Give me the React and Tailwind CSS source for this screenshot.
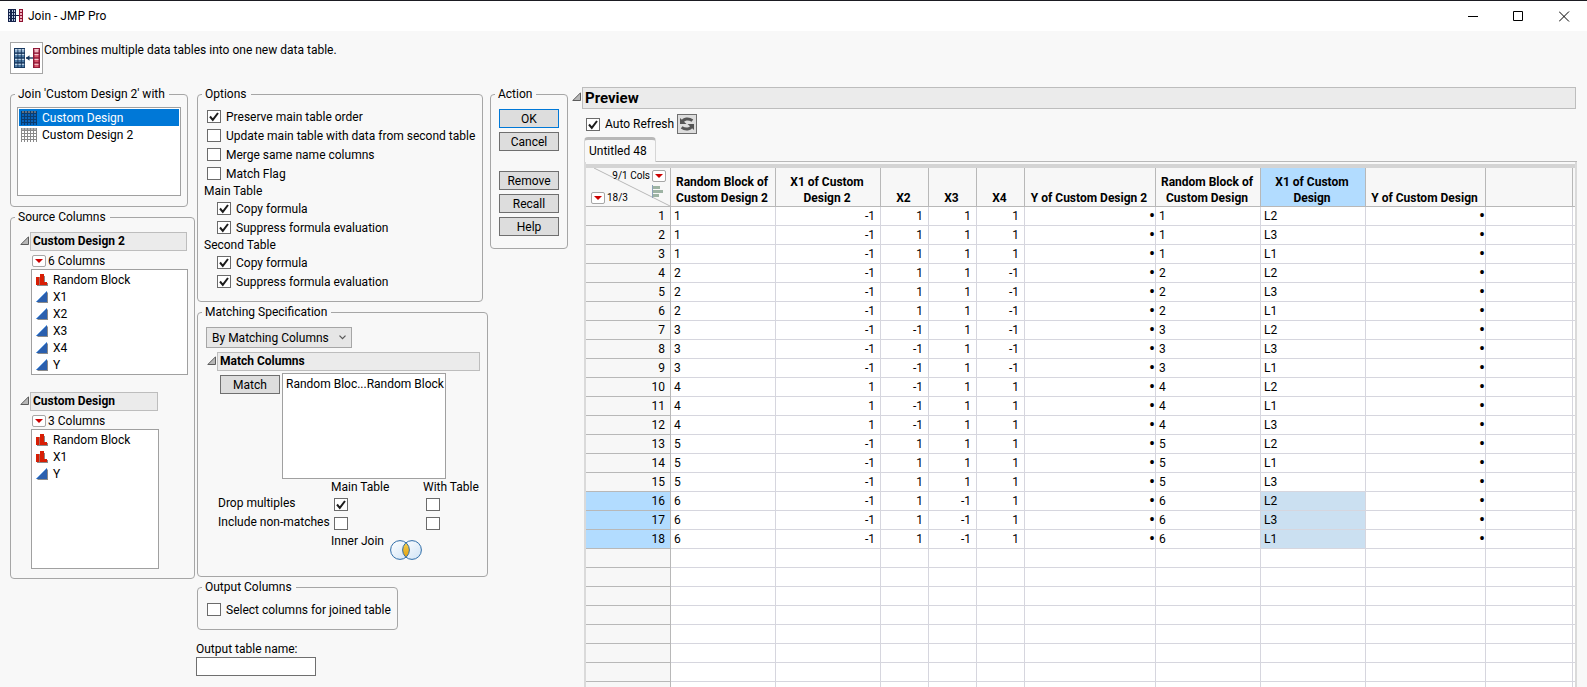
import React from 'react';

const cx = (...parts) => parts.filter(Boolean).join(' ');

/* ---------- icons ---------- */

function JoinIcon({ className }) {
  const rows = [0, 1, 2, 3];
  return (
    <svg viewBox="0 0 26 22" className={className} aria-hidden="true">
      <rect x="0" y="1" width="11" height="20" fill="#17375e" />
      {rows.map((r) =>
        [0, 1, 2].map((c) => (
          <g key={`${r}-${c}`}>
            <rect x={1 + c * 3.4} y={2 + r * 4.9} width="2.4" height="3.4" fill={r === 0 ? '#8fb0cf' : '#4f7ca6'} />
            <rect x={1 + c * 3.4} y={2 + r * 4.9} width="2.4" height="1.2" fill="#c3d5e6" />
          </g>
        ))
      )}
      <path d="M12 11h7" stroke="#17375e" strokeWidth="1.4" />
      <path d="M15.5 8.2v5.6L12 11z" fill="#17375e" />
      <rect x="19" y="1" width="7" height="20" fill="#8e1836" />
      {rows.map((r) => (
        <g key={r}>
          <rect x="20.5" y={2 + r * 4.9} width="4" height="3.4" fill={r === 0 ? '#f0b7c2' : '#d8566b'} />
          <rect x="20.5" y={2 + r * 4.9} width="4" height="1.2" fill="#f3c6ce" />
        </g>
      ))}
    </svg>
  );
}

function SmallJoinIcon() {
  return (
    <svg viewBox="0 0 16 14" className="h-3.5 w-4 shrink-0" shapeRendering="crispEdges" aria-hidden="true">
      <path d="M0 0h8v13H0z" fill="#14224a" />
      <path d="M1 1h1v2H1zM4 1h1v2H4zM6 1h1v2H6zM1 4h1v2H1zM4 4h1v2H4zM6 4h1v2H6zM1 7h1v2H1zM4 7h1v2H4zM6 7h1v2H6zM1 10h1v2H1zM4 10h1v2H4zM6 10h1v2H6z" fill="#b9c6dd" />
      <path d="M8 6h3v1H8z" fill="#14224a" />
      <path d="M11 0h4v13h-4z" fill="#8e1230" />
      <path d="M12 1h2v2h-2zM12 4h2v2h-2zM12 7h2v2h-2zM12 10h2v2h-2z" fill="#efb3bf" />
    </svg>
  );
}

function TableIcon({ selected }) {
  const line = selected ? '#0b3c6e' : '#8a8a8a';
  return (
    <svg viewBox="0 0 16 14" className="h-3.5 w-4 shrink-0" shapeRendering="crispEdges" aria-hidden="true">
      <rect width="16" height="14" fill={selected ? '#0a62b8' : '#ffffff'} />
      <rect width="16" height="2" fill={selected ? '#5f6f80' : '#b5b5b5'} />
      <path d="M0 2.5h16M0 5.5h16M0 8.5h16M0 11.5h16M.5 0v14M3.5 0v14M6.5 0v14M9.5 0v14M12.5 0v14M15.5 0v14" stroke={line} fill="none" />
    </svg>
  );
}

function NominalIcon() {
  return (
    <svg viewBox="0 0 12 12" className="size-3 shrink-0" shapeRendering="crispEdges" aria-hidden="true">
      <path d="M1 11h11v1H1zM8 2h1v9H8zM11 9h1v3h-1z" fill="#8b8b8b" />
      <path d="M0 3h3v8H0zM4 0h4v11H4zM8 8h3v3H8z" fill="#d81e05" />
      <path d="M3 3h1v8H3z" fill="#a86a60" />
    </svg>
  );
}

function ContinuousIcon() {
  return (
    <svg viewBox="0 0 12 12" className="size-3 shrink-0" aria-hidden="true">
      <path d="M1 12 12 1v11z" fill="#8b8b8b" />
      <path d="M0 11 11 0v11z" fill="#2a5fae" />
      <path d="M0 11 11 0" stroke="#6ea6e6" />
    </svg>
  );
}

function RedTriangle({ label }) {
  return (
    <button type="button" aria-label={label} className="flex h-3 w-3.5 shrink-0 items-center justify-center rounded-xs border border-[#a6a6a6] bg-white">
      <svg viewBox="0 0 8 4" className="h-1 w-2" aria-hidden="true">
        <path d="M0 0h8L4 4z" fill="#cc0000" />
      </svg>
    </button>
  );
}

function Disclosure() {
  return (
    <svg viewBox="0 0 9 12" className="h-3 w-[9px] shrink-0" aria-hidden="true">
      <path d="M.8 8.500h7.700V.8z" fill="#b8b8b8" stroke="#5c5c5c" />
    </svg>
  );
}

function RefreshIcon() {
  return (
    <svg viewBox="0 0 16 16" className="size-4" aria-hidden="true">
      <path d="M3.200 6C4.600 2.600 9.500 1.800 13.400 4.600" stroke="#555" strokeWidth="3" fill="none" />
      <path d="M1 2v6h6.500z" fill="#555" />
      <path d="M12.800 10C11.400 13.400 6.500 14.200 2.600 11.400" stroke="#555" strokeWidth="3" fill="none" />
      <path d="M15 14V8H8.500z" fill="#555" />
    </svg>
  );
}

function VennIcon() {
  return (
    <svg viewBox="0 0 32 20" className="h-5 w-8" aria-hidden="true">
      <defs>
        <linearGradient id="ring" x1="0" y1="0" x2="1" y2="1">
          <stop offset="0" stopColor="#ffffff" />
          <stop offset="1" stopColor="#cfe3f5" />
        </linearGradient>
        <linearGradient id="lens" x1="0" y1="0" x2="0" y2="1">
          <stop offset="0" stopColor="#f8cf4a" />
          <stop offset="1" stopColor="#e0a010" />
        </linearGradient>
      </defs>
      <circle cx="10" cy="10" r="9.400" fill="url(#ring)" />
      <circle cx="22" cy="10" r="9.400" fill="url(#ring)" />
      <path d="M16 2.800a9.400 9.400 0 0 1 0 14.400a9.400 9.400 0 0 1 0-14.400z" fill="url(#lens)" />
      <circle cx="10" cy="10" r="9.400" fill="none" stroke="#2f6da8" />
      <circle cx="22" cy="10" r="9.400" fill="none" stroke="#2f6da8" />
    </svg>
  );
}

/* ---------- controls ---------- */

function Check({ label, hiddenLabel, checked, className }) {
  return (
    <label className={cx('flex h-[19px] items-center gap-[5px]', className)}>
      <span className="grid shrink-0">
        <input
          type="checkbox"
          defaultChecked={checked}
          aria-label={hiddenLabel}
          className="peer col-start-1 row-start-1 h-[13px] w-3.5 appearance-none border border-[#6b6b6b] bg-white"
        />
        <svg viewBox="0 0 14 13" className="pointer-events-none invisible col-start-1 row-start-1 h-[13px] w-3.5 peer-checked:visible" aria-hidden="true">
          <path d="M3 6.500 5.800 9.800 11 3" stroke="#1c1c1c" strokeWidth="2" fill="none" />
        </svg>
      </span>
      {label && <span className="whitespace-nowrap">{label}</span>}
    </label>
  );
}

function Group({ title, children, className }) {
  return (
    <fieldset className={cx('min-w-0 rounded-sm border border-[#a6a6a6]', className)}>
      <legend className="ml-1 pr-1 pl-[3px] whitespace-nowrap">{title}</legend>
      {children}
    </fieldset>
  );
}

function PushButton({ children, primary, className }) {
  return (
    <button type="button" className={cx('h-[19px] w-[60px] border bg-[#dddddd] text-center leading-4', primary ? 'border-[#0078d7]' : 'border-[#6f6f6f]', className)}>
      {children}
    </button>
  );
}

function OutlineTitle({ children, className }) {
  return (
    <div className={cx('flex items-center gap-px', className)}>
      <Disclosure />
      <h3 className="h-[19px] flex-1 border border-[#bdbdbd] bg-[#ebebeb] pl-0.5 leading-4 font-bold whitespace-nowrap">{children}</h3>
    </div>
  );
}

function ColumnList({ title, count, columns, titleWidth, listClass }) {
  return (
    <section>
      <OutlineTitle className={titleWidth}>{title}</OutlineTitle>
      <div className="mt-0.5 ml-3 flex items-center gap-0.5">
        <RedTriangle label={`${title} column options`} />
        <span>{count}</span>
      </div>
      <ul role="listbox" aria-label={title} className={cx('ml-[11px] border border-[#a0a0a0] bg-white py-px pl-1', listClass)}>
        {columns.map(([name, kind]) => (
          <li key={name} role="option" aria-selected="false" className="flex h-[17px] items-center gap-[5px]">
            {kind === 'nominal' ? <NominalIcon /> : <ContinuousIcon />}
            <span>{name}</span>
          </li>
        ))}
      </ul>
    </section>
  );
}

/* ---------- data ---------- */

const mainColumns = [
  ['Random Block', 'nominal'],
  ['X1', 'continuous'],
  ['X2', 'continuous'],
  ['X3', 'continuous'],
  ['X4', 'continuous'],
  ['Y', 'continuous'],
];
const withColumns = [
  ['Random Block', 'nominal'],
  ['X1', 'nominal'],
  ['Y', 'continuous'],
];

const headers = [
  ['Random Block of', 'Custom Design 2'],
  ['X1 of Custom', 'Design 2'],
  ['X2'],
  ['X3'],
  ['X4'],
  ['Y of Custom Design 2'],
  ['Random Block of', 'Custom Design'],
  ['X1 of Custom', 'Design'],
  ['Y of Custom Design'],
];

const blockValues = [
  [1, [-1, 1, 1, 1], ['L2', 'L3', 'L1']],
  [2, [-1, 1, 1, -1], ['L2', 'L3', 'L1']],
  [3, [-1, -1, 1, -1], ['L2', 'L3', 'L1']],
  [4, [1, -1, 1, 1], ['L2', 'L1', 'L3']],
  [5, [-1, 1, 1, 1], ['L2', 'L1', 'L3']],
  [6, [-1, 1, -1, 1], ['L2', 'L3', 'L1']],
];
const rows = blockValues.flatMap(([block, xs, levels]) => levels.map((level) => [block, ...xs, '•', block, level, '•']));
const leftAligned = [0, 6, 7];
const blankRows = [0, 1, 2, 3, 4, 5, 6, 7];

/* ---------- preview table ---------- */

function PreviewTable() {
  return (
    <table className="w-full table-fixed border-separate border-spacing-0 bg-white">
      <colgroup>
        <col className="w-[85px]" />
        <col className="w-[105px]" />
        <col className="w-[105px]" />
        <col className="w-12" />
        <col className="w-12" />
        <col className="w-12" />
        <col className="w-[131px]" />
        <col className="w-[105px]" />
        <col className="w-[105px]" />
        <col className="w-[120px]" />
        <col className="w-[87px]" />
        <col />
      </colgroup>
      <thead>
        <tr className="h-[39px] bg-[#f7f7f7]">
          <th className="relative h-[39px] border-r border-b border-[#b8b8b8] p-0 font-normal">
            <svg viewBox="0 0 84 38" className="absolute inset-0 size-full" aria-hidden="true">
              <path d="M8 0 84 38" stroke="#b8b8b8" />
              <path d="M66.500 17v13" stroke="#8ba0b8" />
              <path d="M67 18h7v3h-7zM67 22h10v3H67zM67 26h6v3h-6z" fill="#9db3a3" />
            </svg>
            <div className="relative flex h-[38px] flex-col justify-between py-0.5 text-[10px] leading-3">
              <span className="flex items-center justify-end gap-0.5 pr-1">
                9/1 Cols
                <RedTriangle label="Column options" />
              </span>
              <span className="flex items-center gap-0.5 pl-[5px]">
                <RedTriangle label="Row options" />
                18/3
              </span>
            </div>
          </th>
          {headers.map((lines, i) => (
            <th key={i} scope="col" className={cx('border-r border-b border-[#b8b8b8] py-0 pr-0.5 pl-0 text-center align-bottom font-bold whitespace-nowrap', i === 7 && 'bg-[#b2dcff]')}>
              {lines.map((line) => (
                <div key={line}>{line}</div>
              ))}
            </th>
          ))}
          <th className="border-r border-b border-[#b8b8b8] p-0" />
          <th className="border-b border-[#b8b8b8] p-0" />
        </tr>
      </thead>
      <tbody>
        {rows.map((cells, r) => (
          <tr key={r}>
            <th scope="row" className={cx('h-[19px] border-r border-b border-[#b8b8b8] py-0 pr-[5px] pl-0 text-right font-normal', r > 14 ? 'bg-[#b2dcff]' : 'bg-[#f7f7f7]')}>
              {r + 1}
            </th>
            {cells.map((value, c) => (
              <td
                key={c}
                className={cx(
                  'border-r border-b border-[#d6d6de] py-0',
                  leftAligned.includes(c) ? 'pr-0 pl-[3px] text-left' : value === '•' ? 'p-0 text-right text-[18px] leading-4' : 'pr-[5px] pl-0 text-right',
                  c === 7 && r > 14 && 'bg-[#cbe0f1]'
                )}
              >
                {value}
              </td>
            ))}
            <td className="border-r border-b border-[#d6d6de] p-0" />
            <td className="border-b border-[#d6d6de] p-0" />
          </tr>
        ))}
        {blankRows.map((r) => (
          <tr key={r}>
            <th className="h-[19px] border-r border-b border-[#b8b8b8] bg-[#f7f7f7] p-0" />
            {headers.map((_, c) => (
              <td key={c} className="border-r border-b border-[#d6d6de] p-0" />
            ))}
            <td className="border-r border-b border-[#d6d6de] p-0" />
            <td className="border-b border-[#d6d6de] p-0" />
          </tr>
        ))}
      </tbody>
    </table>
  );
}

/* ---------- window ---------- */

export default function App() {
  return (
    <div className="flex h-screen flex-col overflow-hidden bg-[#f8f8f8] font-['Roboto','Noto_Sans',sans-serif] text-[12px] leading-4 text-black">
      <header className="flex h-[31px] shrink-0 items-center border-t border-[#1b1b22] bg-white pl-2">
        <SmallJoinIcon />
        <h1 className="ml-1 flex-1">Join - JMP Pro</h1>
        <div className="flex items-center gap-[35px] pr-[17px]">
          <button type="button" aria-label="Minimize">
            <svg viewBox="0 0 11 11" className="size-[11px]" aria-hidden="true"><path d="M1 5.500h10" stroke="#000" /></svg>
          </button>
          <button type="button" aria-label="Maximize">
            <svg viewBox="0 0 11 11" className="size-[11px]" aria-hidden="true"><path d="M.5.5h9v9h-9z" stroke="#000" fill="none" /></svg>
          </button>
          <button type="button" aria-label="Close">
            <svg viewBox="0 0 11 11" className="size-[11px]" aria-hidden="true"><path d="M0 .5l10 10M10 .5l-10 10" stroke="#000" fill="none" /></svg>
          </button>
        </div>
      </header>

      <div className="flex h-[55px] shrink-0 items-start gap-px pt-[11px] pl-2.5">
        <div className="flex h-8 w-[33px] items-center justify-center border border-[#a6a6a6] bg-white">
          <JoinIcon className="h-[22px] w-[26px]" />
        </div>
        <p>Combines multiple data tables into one new data table.</p>
      </div>

      <main className="flex min-h-0 flex-1 items-start pr-2.5 pl-2.5">
        <div className="mr-0.5 flex w-[185px] shrink-0 flex-col gap-0.5">
          <Group title="Join 'Custom Design 2' with" className="w-[178px]">
            <ul role="listbox" aria-label="Join with" className="mx-1.5 mt-[5px] mb-2.5 h-[89px] border border-[#a0a0a0] bg-white p-px">
              <li role="option" aria-selected="true" className="flex h-[17px] items-center gap-[5px] bg-[#0078d7] pl-0.5 text-white">
                <TableIcon selected />
                Custom Design
              </li>
              <li role="option" aria-selected="false" className="flex h-[17px] items-center gap-[5px] pl-0.5">
                <TableIcon />
                Custom Design 2
              </li>
            </ul>
          </Group>

          <Group title="Source Columns">
            <div className="flex flex-col gap-[17px] pt-[7px] pb-[9px] pl-[9px]">
              <ColumnList title="Custom Design 2" count="6 Columns" columns={mainColumns} titleWidth="w-[167px]" listClass="h-[106px] w-[157px]" />
              <ColumnList title="Custom Design" count="3 Columns" columns={withColumns} titleWidth="w-[138px]" listClass="h-[140px] w-[128px]" />
            </div>
          </Group>
        </div>

        <div className="mr-0.5 flex w-[291px] shrink-0 flex-col gap-0.5">
          <Group title="Options" className="w-[286px]">
            <div className="pt-[5px] pb-2.5 pl-[9px]">
              <Check label="Preserve main table order" checked />
              <Check label="Update main table with data from second table" />
              <Check label="Merge same name columns" />
              <Check label="Match Flag" />
              <div className="-ml-[3px]">Main Table</div>
              <Check label="Copy formula" checked className="ml-2.5" />
              <Check label="Suppress formula evaluation" checked className="ml-2.5" />
              <div className="-ml-[3px]">Second Table</div>
              <Check label="Copy formula" checked className="ml-2.5" />
              <Check label="Suppress formula evaluation" checked className="ml-2.5" />
            </div>
          </Group>

          <Group title="Matching Specification">
            <div className="pt-[7px] pb-[15px] pl-2">
              <div className="grid w-[146px]">
                <select aria-label="Matching specification" className="col-start-1 row-start-1 h-[21px] appearance-none border border-[#a6a6a6] bg-[#e6e6e6] pl-[5px] leading-4">
                  <option>By Matching Columns</option>
                </select>
                <svg viewBox="0 0 7 5" className="pointer-events-none col-start-1 row-start-1 mr-1.5 h-[5px] w-[7px] self-center justify-self-end" aria-hidden="true">
                  <path d="M.5.7l3 3 3-3" stroke="#555" fill="none" strokeWidth="1.200" />
                </svg>
              </div>
              <OutlineTitle className="mt-1 ml-px w-[273px]">Match Columns</OutlineTitle>
              <div className="mt-0.5 ml-3.5 flex items-start gap-0.5">
                <PushButton className="mt-0.5">Match</PushButton>
                <ul role="listbox" aria-label="Matched columns" className="h-[106px] w-[164px] border border-[#a0a0a0] bg-white pt-0.5 pl-[3px]">
                  <li role="option" aria-selected="false" className="whitespace-nowrap">Random Bloc...Random Block</li>
                </ul>
              </div>
              <div className="ml-3 grid grid-cols-[113px_92px_60px]">
                <span />
                <span className="whitespace-nowrap">Main Table</span>
                <span className="whitespace-nowrap">With Table</span>
                <span className="whitespace-nowrap">Drop multiples</span>
                <Check hiddenLabel="Drop multiples of main table" checked className="ml-[3px]" />
                <Check hiddenLabel="Drop multiples of with table" className="ml-[3px]" />
                <span className="whitespace-nowrap">Include non-matches</span>
                <Check hiddenLabel="Include non-matches of main table" className="ml-[3px]" />
                <Check hiddenLabel="Include non-matches of with table" className="ml-[3px]" />
                <span />
                <div className="col-span-2 flex h-7 gap-1.5">
                  <span className="whitespace-nowrap">Inner Join</span>
                  <span className="pt-[7px]"><VennIcon /></span>
                </div>
              </div>
            </div>
          </Group>

          <Group title="Output Columns" className="w-[201px]">
            <div className="pt-[5px] pb-2.5 pl-[9px]">
              <Check label="Select columns for joined table" />
            </div>
          </Group>

          <label className="mt-[9px] -ml-px flex flex-col items-start">
            Output table name:
            <input type="text" className="h-[19px] w-[120px] border border-[#6f6f6f] bg-white px-1" />
          </label>
        </div>

        <Group title="Action" className="mr-1 w-[78px] shrink-0">
          <div className="flex flex-col items-start gap-1 pt-[7px] pb-3 pl-2">
            <PushButton primary>OK</PushButton>
            <PushButton>Cancel</PushButton>
            <PushButton className="mt-4">Remove</PushButton>
            <PushButton>Recall</PushButton>
            <PushButton>Help</PushButton>
          </div>
        </Group>

        <section className="flex h-full min-w-0 flex-1 flex-col pt-px">
          <div className="flex shrink-0 items-center gap-px pr-px">
            <Disclosure />
            <h2 className="h-[22px] flex-1 border border-[#bdbdbd] bg-[#ebebeb] pl-0.5 text-[15px] leading-5 font-bold">Preview</h2>
          </div>
          <div className="mt-[5px] ml-3.5 flex shrink-0 items-center gap-[3px]">
            <Check label="Auto Refresh" checked />
            <button type="button" aria-label="Refresh preview" className="flex size-5 items-center justify-center border border-[#6f6f6f] bg-[#dddddd]">
              <RefreshIcon />
            </button>
          </div>
          <div className="mt-[3px] ml-3 flex shrink-0 items-stretch">
            <button type="button" className="h-[25px] rounded-t-sm border-t-[3px] border-r border-l border-t-[#b8b8b8] border-r-[#d6d6d6] border-l-[#d6d6d6] pr-2 pl-1 whitespace-nowrap">
              Untitled 48
            </button>
            <div className="flex-1 border-b border-[#b8b8b8]" />
          </div>
          <div className="ml-3 min-h-0 flex-1 overflow-hidden border-r-2 border-l-2 border-[#dadada] pt-0.5">
            <div className="h-1 bg-[#d4d4d4]" />
            <PreviewTable />
          </div>
        </section>
      </main>
    </div>
  );
}
